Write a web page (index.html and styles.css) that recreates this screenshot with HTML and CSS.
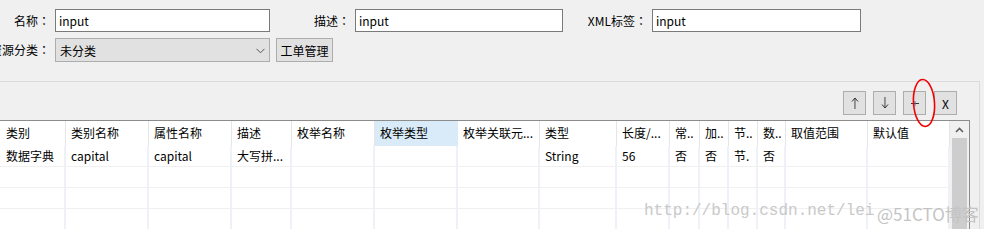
FILE: index.html
```html
<!DOCTYPE html>
<html lang="zh-CN">
<head>
<meta charset="utf-8">
<title>属性编辑</title>
<link rel="stylesheet" href="styles.css">
</head>
<body>
<div class="form">
  <div class="row row-1">
    <label class="lbl lbl-1">名称<span class="colon">：</span></label>
    <input class="field f-1" type="text" value="input">
    <label class="lbl lbl-2">描述<span class="colon">：</span></label>
    <input class="field f-2" type="text" value="input">
    <label class="lbl lbl-3">XML标签<span class="colon">：</span></label>
    <input class="field f-3" type="text" value="input">
  </div>
  <div class="row row-2">
    <label class="lbl lbl-1">资源分类<span class="colon">：</span></label>
    <div class="select">
      <span>未分类</span>
      <svg class="chev" width="9" height="6" viewBox="0 0 9 6"><path d="M0.5 0.8 L4.5 4.8 L8.5 0.8" fill="none" stroke="#555" stroke-width="1"/></svg>
    </div>
    <button class="btn">工单管理</button>
  </div>
</div>

<div class="panel">
  <div class="toolbar">
    <button class="tbtn">
      <svg width="10" height="14" viewBox="0 0 10 14"><path d="M5 2 V13" stroke="#4a6f9a" stroke-width="1.2"/><path d="M2 5.5 L5 2 L8 5.5" fill="none" stroke="#333" stroke-width="1"/><path d="M4.5 3 V13" stroke="#b07a3a" stroke-width="0.6"/></svg>
    </button>
    <button class="tbtn">
      <svg width="10" height="14" viewBox="0 0 10 14"><path d="M5 1 V12" stroke="#4a6f9a" stroke-width="1.2"/><path d="M2 8.5 L5 12 L8 8.5" fill="none" stroke="#333" stroke-width="1"/><path d="M4.5 1 V11" stroke="#b07a3a" stroke-width="0.6"/></svg>
    </button>
    <button class="tbtn">
      <svg width="10" height="10" viewBox="0 0 10 10"><path d="M1 5.5 H9" stroke="#333" stroke-width="1"/><path d="M5 3 V8" stroke="#4a6f9a" stroke-width="1"/></svg>
    </button>
    <button class="tbtn tbtn-x">X</button>
  </div>

  <div class="table">
    <div class="grid">
      <div class="hrow">
        <div class="hc">类别</div>
        <div class="hc">类别名称</div>
        <div class="hc">属性名称</div>
        <div class="hc">描述</div>
        <div class="hc">枚举名称</div>
        <div class="hc sel">枚举类型</div>
        <div class="hc">枚举关联元...</div>
        <div class="hc">类型</div>
        <div class="hc">长度/...</div>
        <div class="hc">常..</div>
        <div class="hc">加..</div>
        <div class="hc">节..</div>
        <div class="hc">数..</div>
        <div class="hc">取值范围</div>
        <div class="hc">默认值</div>
      </div>
      <div class="drow">
        <div class="dc">数据字典</div>
        <div class="dc">capital</div>
        <div class="dc">capital</div>
        <div class="dc">大写拼...</div>
        <div class="dc"></div>
        <div class="dc"></div>
        <div class="dc"></div>
        <div class="dc">String</div>
        <div class="dc">56</div>
        <div class="dc">否</div>
        <div class="dc">否</div>
        <div class="dc">节.</div>
        <div class="dc">否</div>
        <div class="dc"></div>
        <div class="dc"></div>
      </div>
      <div class="drow">
        <div class="dc"></div><div class="dc"></div><div class="dc"></div><div class="dc"></div><div class="dc"></div>
        <div class="dc"></div><div class="dc"></div><div class="dc"></div><div class="dc"></div><div class="dc"></div>
        <div class="dc"></div><div class="dc"></div><div class="dc"></div><div class="dc"></div><div class="dc"></div>
      </div>
      <div class="drow">
        <div class="dc"></div><div class="dc"></div><div class="dc"></div><div class="dc"></div><div class="dc"></div>
        <div class="dc"></div><div class="dc"></div><div class="dc"></div><div class="dc"></div><div class="dc"></div>
        <div class="dc"></div><div class="dc"></div><div class="dc"></div><div class="dc"></div><div class="dc"></div>
      </div>
      <div class="drow">
        <div class="dc"></div><div class="dc"></div><div class="dc"></div><div class="dc"></div><div class="dc"></div>
        <div class="dc"></div><div class="dc"></div><div class="dc"></div><div class="dc"></div><div class="dc"></div>
        <div class="dc"></div><div class="dc"></div><div class="dc"></div><div class="dc"></div><div class="dc"></div>
      </div>
    </div>
    <div class="scrollbar">
      <div class="sb-up">
        <svg width="9" height="6" viewBox="0 0 9 6"><path d="M1 5 L4.5 1.5 L8 5" fill="none" stroke="#606060" stroke-width="1.6"/></svg>
      </div>
      <div class="sb-thumb"></div>
    </div>
  </div>
</div>

<svg class="mark" width="30" height="54" viewBox="0 0 30 54"><ellipse cx="14" cy="26" rx="10.5" ry="23.5" transform="rotate(-4 14 26)" fill="none" stroke="#f00000" stroke-width="1.6"/></svg>
<div class="wm wm-url">http://blog.csdn.net/lei</div>
<div class="wm wm-51">@51CTO博客</div>
</body>
</html>
```

FILE: styles.css
```css
* { box-sizing: border-box; }

html, body {
  margin: 0;
  padding: 0;
  background: #f0f0f0;
  overflow: hidden;
}

body {
  width: 984px;
  height: 229px;
  position: relative;
  font-family: "Noto Sans CJK SC", "Noto Sans", sans-serif;
  font-size: 12px;
  color: #000;
}

.form {
  padding-top: 9px;
}

.row {
  display: flex;
  align-items: center;
}

.row-1 { height: 23px; }
.row-2 { height: 24px; margin-top: 6px; }

.lbl {
  display: flex;
  justify-content: flex-end;
  white-space: nowrap;
  flex: none;
  line-height: 16px;
}

.colon {
  font-family: "Noto Sans CJK JP", "Noto Sans CJK SC", sans-serif;
}

.lbl-1 { width: 50px; margin-right: 5px; }
.lbl-2 { width: 80px; margin-right: 5px; }
.lbl-3 { width: 84px; margin-right: 5px; }

.field {
  height: 23px;
  border: 1px solid #7a7a7a;
  background: #fff;
  padding: 0 3px;
  margin: 0;
  font-family: "Noto Sans CJK SC", "Noto Sans", sans-serif;
  font-size: 12px;
  color: #000;
  outline: none;
  flex: none;
}

.f-1 { width: 215px; }
.f-2 { width: 208px; }
.f-3 { width: 209px; }

.select {
  width: 215px;
  height: 24px;
  border: 1px solid #adadad;
  background: #e1e1e1;
  display: flex;
  align-items: center;
  justify-content: space-between;
  padding: 0 4px 0 4px;
  flex: none;
}

.chev { display: block; margin-top: 1px; }

.btn {
  margin-left: 6px;
  width: 57px;
  height: 24px;
  border: 1px solid #adadad;
  background: #e1e1e1;
  font-family: "Noto Sans CJK SC", "Noto Sans", sans-serif;
  font-size: 12px;
  color: #000;
  padding: 0;
  flex: none;
}

.panel {
  margin-top: 19px;
  width: 980px;
  height: 148px;
  border-top: 1px solid #dadada;
  border-right: 1px solid #dadada;
}

.toolbar {
  display: flex;
  justify-content: flex-end;
  gap: 7px;
  padding: 9px 22px 0 0;
  height: 38px;
}

.tbtn {
  width: 23px;
  height: 24px;
  border: 1px solid #adadad;
  background: #e1e1e1;
  padding: 0;
  display: flex;
  align-items: center;
  justify-content: center;
  font-family: "Noto Sans CJK SC", "Noto Sans", sans-serif;
  font-size: 12px;
  color: #000;
}

.tbtn-x { margin-left: 1px; }

.table {
  display: flex;
  width: 970px;
  height: 120px;
  border-top: 1px solid #8c8c8c;
  border-right: 1px solid #8c8c8c;
  background: #fff;
}

.grid {
  width: 950px;
  flex: none;
}

.hrow, .drow {
  display: grid;
  grid-template-columns: 66px 83px 83px 60px 83px 83px 82px 77px 53px 30px 29px 29px 28px 82px 82px;
}

.hrow { height: 25px; }

.hc {
  border-right: 1px solid #e5e5e5;
  padding-left: 5px;
  line-height: 24px;
  white-space: nowrap;
  overflow: hidden;
}

.hc:first-child { padding-left: 6px; }

.hc.sel {
  background: #d9ebf9;
  border-right-color: #d9ebf9;
}

.drow {
  height: 21px;
  border-bottom: 1px solid #f0f0f0;
}

.dc {
  border-right: 2px solid #eef2f8;
  padding-left: 5px;
  line-height: 20px;
  white-space: nowrap;
  overflow: hidden;
}

.dc:first-child { padding-left: 6px; }

.scrollbar {
  width: 19px;
  flex: none;
  background: #f0f0f0;
  display: flex;
  flex-direction: column;
  align-items: center;
}

.sb-up {
  height: 17px;
  width: 100%;
  display: flex;
  align-items: center;
  justify-content: center;
}

.sb-thumb {
  width: 15px;
  flex: 1;
  background: #cdcdcd;
}

.mark {
  position: absolute;
  left: 910px;
  top: 77px;
}

.wm {
  position: absolute;
  white-space: nowrap;
  color: #c9c9c9;
}

.wm-url {
  left: 644px;
  top: 201px;
  font-family: "Liberation Mono", monospace;
  font-size: 16px;
  line-height: 20px;
}

.wm-51 {
  left: 877px;
  top: 203px;
  font-family: "Noto Sans CJK SC", sans-serif;
  font-size: 17px;
  line-height: 22px;
  color: #c4c4c4;
}
```
